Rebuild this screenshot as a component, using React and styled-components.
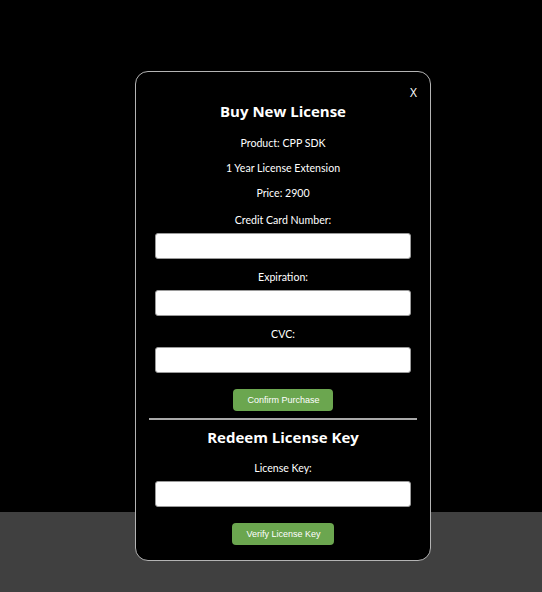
import React from 'react'
import styled, { createGlobalStyle } from "styled-components";

const GlobalStyle = createGlobalStyle`
  html, body {
    margin: 0;
    padding: 0;
    background: #404040;
    font-family: Lato, "Open Sans", sans-serif;
  }
`;

const Page = styled.div`
  position: relative;
  height: 592px;
`;

const Backdrop = styled.div`
  height: 512px;
  background: #000;
`;

const Modal = styled.div`
  position: absolute;
  left: 135px;
  top: 71px;
  width: 296px;
  height: 490px;
  box-sizing: border-box;
  background: #000;
  border: 1px solid #b4b4b4;
  border-radius: 13px;
  padding: 28px 19px 0;
  display: flex;
  flex-direction: column;
  align-items: stretch;
  color: #fff;
`;

const Close = styled.span`
  position: absolute;
  top: 13px;
  right: 13px;
  font-family: "Open Sans", sans-serif;
  font-size: 12px;
  line-height: 16px;
  color: #fff;
  cursor: pointer;
`;

const Title = styled.h2`
  margin: ${p => p.$mt || 0}px 0 0;
  font-family: "Open Sans", sans-serif;
  font-size: 15px;
  font-weight: 700;
  line-height: 22px;
  text-align: center;
  color: #fff;
`;

const Text = styled.div`
  margin-top: ${p => p.$mt}px;
  font-size: 10.6px;
  line-height: 16px;
  text-align: center;
`;

const Input = styled.input`
  display: block;
  margin-top: ${p => p.$mt || 5}px;
  height: 26px;
  box-sizing: border-box;
  width: 100%;
  border: 1px solid #9a9a9a;
  border-radius: 3px;
  background: #fff;
  padding: 0 6px;
`;

const Button = styled.button`
  align-self: center;
  margin-top: 16px;
  height: 22px;
  padding: 0 13px 0 14px;
  border: none;
  border-radius: 4px;
  background: #6ba64f;
  color: #fff;
  font-family: "Liberation Sans", Arial, sans-serif;
  font-size: 9px;
  cursor: pointer;
`;

const Divider = styled.div`
  margin: 7px -6px 0;
  height: 2px;
  background: #a9a9a9;
`;

function App() {
  return (
    <Page>
      <GlobalStyle />
      <Backdrop />
      <Modal>
        <Close>X</Close>
        <Title>Buy New License</Title>
        <Text $mt={13}>Product: CPP SDK</Text>
        <Text $mt={9}>1 Year License Extension</Text>
        <Text $mt={9}>Price: 2900</Text>
        <Text $mt={11}>Credit Card Number:</Text>
        <Input type="text" />
        <Text $mt={10}>Expiration:</Text>
        <Input type="text" />
        <Text $mt={10}>CVC:</Text>
        <Input type="text" />
        <Button>Confirm Purchase</Button>
        <Divider />
        <Title $mt={6}>Redeem License Key</Title>
        <Text $mt={12}>License Key:</Text>
        <Input type="text" $mt={5} />
        <Button>Verify License Key</Button>
      </Modal>
    </Page>
  )
}

export default App
